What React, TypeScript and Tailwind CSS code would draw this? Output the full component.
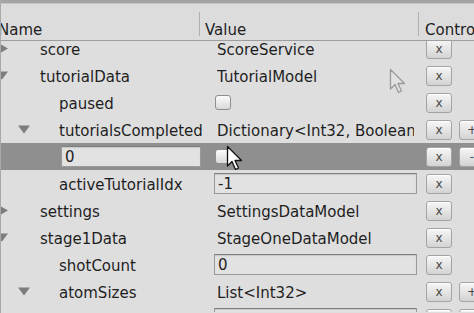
import React from 'react';

type Arrow = 'right' | 'down' | null;
type Value =
  | { kind: 'text'; text: string }
  | { kind: 'input'; text: string }
  | { kind: 'check' }
  | { kind: 'none' };

interface Row {
  depth: number;
  arrow: Arrow;
  name?: string;
  keyInput?: string;
  value: Value;
  extra?: '+' | '-';
  selected?: boolean;
}

const rows: Row[] = [
  { depth: 0, arrow: 'right', name: 'score', value: { kind: 'text', text: 'ScoreService' } },
  { depth: 0, arrow: 'down', name: 'tutorialData', value: { kind: 'text', text: 'TutorialModel' } },
  { depth: 1, arrow: null, name: 'paused', value: { kind: 'check' } },
  {
    depth: 1,
    arrow: 'down',
    name: 'tutorialsCompleted',
    value: { kind: 'text', text: 'Dictionary<Int32, Boolean>' },
    extra: '+',
  },
  { depth: 2, arrow: null, keyInput: '0', value: { kind: 'check' }, extra: '-', selected: true },
  { depth: 1, arrow: null, name: 'activeTutorialIdx', value: { kind: 'input', text: '-1' } },
  { depth: 0, arrow: 'right', name: 'settings', value: { kind: 'text', text: 'SettingsDataModel' } },
  { depth: 0, arrow: 'down', name: 'stage1Data', value: { kind: 'text', text: 'StageOneDataModel' } },
  { depth: 1, arrow: null, name: 'shotCount', value: { kind: 'input', text: '0' } },
  { depth: 1, arrow: 'down', name: 'atomSizes', value: { kind: 'text', text: 'List<Int32>' }, extra: '+' },
  { depth: 2, arrow: null, value: { kind: 'input', text: '' }, extra: '-' },
];

function Triangle({ dir }: { dir: Arrow }) {
  if (!dir) return null;
  return (
    <svg width="12" height="11" viewBox="0 0 12 11" className="block">
      {dir === 'right' ? (
        <polygon points="3,0.5 12,5.5 3,10.5" fill="#7d7d7d" />
      ) : (
        <polygon points="0,1.5 12,1.5 6,9.5" fill="#7d7d7d" />
      )}
    </svg>
  );
}

function SmallButton({ label }: { label: string }) {
  return (
    <div className="w-[26px] h-[20px] shrink-0 rounded-[3px] border border-[#a3a3a3] bg-gradient-to-b from-[#f6f6f6] to-[#d3d3d3] flex items-center justify-center text-[12px] leading-none text-[#4a4a4a] shadow-[inset_0_1px_0_#ffffff]">
      {label}
    </div>
  );
}

function Checkbox() {
  return (
    <div className="w-[16px] h-[15px] rounded-[3px] border border-[#8e8e8e] bg-gradient-to-b from-[#fbfbfb] to-[#d9d9d9]" />
  );
}

function TextField({ text, width }: { text: string; width: string }) {
  return (
    <div
      className={`${width} h-[21px] border border-[#9a9a9a] border-t-[#7f7f7f] bg-[#e2e2e2] flex items-center pl-[3px] pt-[2px] text-[15px] text-[#222] shadow-[inset_0_1px_1px_rgba(0,0,0,0.12)]`}
    >
      {text}
    </div>
  );
}

function NameCell({ row }: { row: Row }) {
  if (row.keyInput !== undefined) {
    return (
      <div className="w-[201px] shrink-0 flex items-center pl-[60px]">
        <TextField text={row.keyInput} width="w-[140px]" />
      </div>
    );
  }
  if (!row.name) return <div className="w-[201px] shrink-0" />;
  return (
    <div className="w-[201px] shrink-0 flex items-center whitespace-nowrap overflow-hidden">
      <div className={row.depth === 0 ? 'ml-[-5px] w-[44px] shrink-0' : 'ml-[17px] w-[41px] shrink-0'}>
        <Triangle dir={row.arrow} />
      </div>
      <span className="pt-[3px]">{row.name}</span>
    </div>
  );
}

function ValueCell({ value }: { value: Value }) {
  return (
    <div className="w-[219px] shrink-0 flex items-center">
      {value.kind === 'text' && (
        <div className="ml-[15px] w-[197px] pt-[3px] overflow-hidden whitespace-nowrap">{value.text}</div>
      )}
      {value.kind === 'input' && (
        <div className="ml-[12px]">
          <TextField text={value.text} width="w-[203px]" />
        </div>
      )}
      {value.kind === 'check' && (
        <div className="ml-[13px]">
          <Checkbox />
        </div>
      )}
    </div>
  );
}

function Cursor({ faded }: { faded?: boolean }) {
  return (
    <svg width="18" height="27" viewBox="0 0 18 27">
      <path
        d="M1.5 1.5 L1.5 21 L6 16.5 L9.5 24.5 L12.5 23 L9 15.5 L15.5 15.5 Z"
        fill={faded ? '#e4e4e4' : '#ffffff'}
        stroke={faded ? '#8a8a8a' : '#111111'}
        strokeWidth="1.3"
        strokeLinejoin="round"
      />
    </svg>
  );
}

export default function App() {
  return (
    <div
      className="relative w-[474px] h-[313px] overflow-hidden bg-[#dedede] text-[#1e1e1e] text-[15px] border-l border-[#a9a9a9]"
      style={{ fontFamily: '"DejaVu Sans", Verdana, sans-serif' }}
    >
      <div className="h-[4px] bg-[#a4a4a4] border-b border-[#c4c4c4]" />
      <div className="h-[37px] flex border-b border-[#9e9e9e] bg-[#dcdcdc]">
        <div className="w-[201px] shrink-0 flex items-center pt-[16px] ml-[-3px]">Name</div>
        <div className="w-[219px] shrink-0 flex">
          <div className="w-px h-[24px] mt-[8px] bg-[#b0b0b0]" />
          <div className="flex items-center pt-[16px] pl-[5px]">Value</div>
        </div>
        <div className="flex-1 flex whitespace-nowrap">
          <div className="w-px h-[24px] mt-[8px] bg-[#b0b0b0]" />
          <div className="flex items-center pt-[16px] pl-[6px]">Controls</div>
        </div>
      </div>
      <div className="overflow-hidden h-[271px]">
        <div className="mt-[-6px]">
          {rows.map((row, i) => (
            <div
              key={i}
              className={`h-[27px] flex items-stretch ${row.selected ? 'bg-[#8f8f8f]' : ''}`}
            >
              <NameCell row={row} />
              <ValueCell value={row.value} />
              <div className="flex items-center gap-[7px] pl-[5px]">
                <SmallButton label="x" />
                {row.extra && <SmallButton label={row.extra} />}
              </div>
            </div>
          ))}
        </div>
      </div>
      <div className="absolute left-[388px] top-[68px] opacity-80">
        <Cursor faded />
      </div>
      <div className="absolute left-[225px] top-[145px]">
        <Cursor />
      </div>
    </div>
  );
}
